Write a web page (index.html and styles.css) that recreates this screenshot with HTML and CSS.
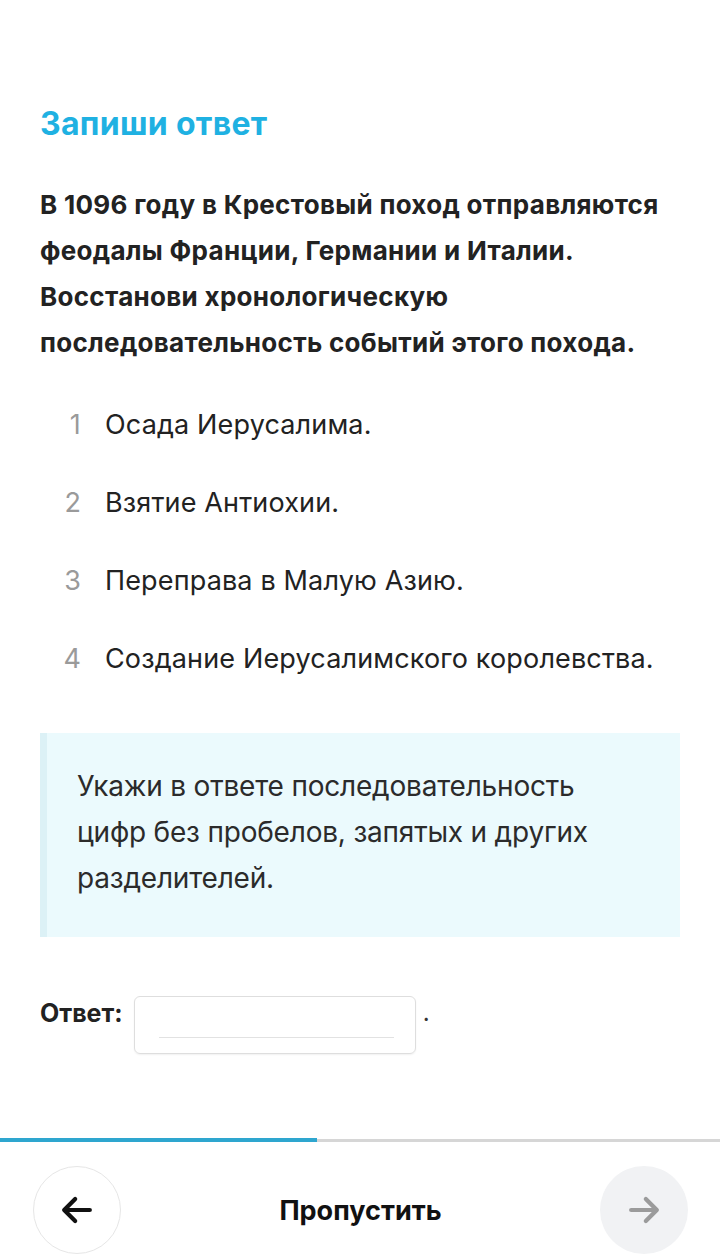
FILE: index.html
```html
<!DOCTYPE html>
<html lang="ru">
<head>
  <meta charset="UTF-8">
  <meta name="viewport" content="width=device-width, initial-scale=1.0">
  <title>Запиши ответ</title>
  <link rel="stylesheet" href="styles.css">
</head>
<body>
  <!-- Task -->
  <main class="task">
    <h1 class="task-title">Запиши ответ</h1>
    <p class="task-question">В 1096 году в Крестовый поход отправляются феодалы Франции, Германии и Италии. Восстанови хронологическую последовательность событий этого похода.</p>

    <ol class="events">
      <li><span class="num">1</span><span>Осада Иерусалима.</span></li>
      <li><span class="num">2</span><span>Взятие Антиохии.</span></li>
      <li><span class="num">3</span><span>Переправа в Малую Азию.</span></li>
      <li><span class="num">4</span><span>Создание Иерусалимского королевства.</span></li>
    </ol>

    <div class="hint">
      Укажи в ответе последовательность цифр без пробелов, запятых и других разделителей.
    </div>

    <div class="answer">
      <span class="answer-label">Ответ:</span>
      <label class="answer-box">
        <input type="text" class="answer-input">
      </label>
      <span class="answer-dot">.</span>
    </div>
  </main>

  <!-- Bottom navigation -->
  <footer class="footer">
    <div class="progress"><div class="progress-fill"></div></div>
    <nav class="nav">
      <button class="nav-btn nav-back" aria-label="Назад">
        <svg width="44" height="44" viewBox="0 0 24 24" fill="none" stroke="#111" stroke-width="2.3" stroke-linecap="round" stroke-linejoin="round">
          <path d="M19 12H5.5"/>
          <path d="M11 6l-6 6 6 6"/>
        </svg>
      </button>
      <span class="skip">Пропустить</span>
      <button class="nav-btn nav-next" aria-label="Далее">
        <svg width="44" height="44" viewBox="0 0 24 24" fill="none" stroke="#9b9b9b" stroke-width="2.3" stroke-linecap="round" stroke-linejoin="round">
          <path d="M5 12h13.5"/>
          <path d="M13 6l6 6-6 6"/>
        </svg>
      </button>
    </nav>
  </footer>
</body>
</html>
```

FILE: styles.css
```css
/* General */
body {
  margin: 0;
  min-height: 100vh;
  display: flex;
  flex-direction: column;
  font-family: Inter, Roboto, "Noto Sans", Arial, sans-serif;
  color: #222;
  background: #fff;
}

.task {
  padding: 106px 40px 0;
}

.task-title {
  margin: 0;
  font-size: 32px;
  line-height: 36px;
  font-weight: 700;
  letter-spacing: 0.3px;
  color: #1fb1e2;
}

.task-question {
  margin: 40px 0 0;
  font-size: 26px;
  line-height: 46px;
  font-weight: 700;
  letter-spacing: 0.3px;
  color: #222;
}

/* Events list */
.events {
  list-style: none;
  margin: 36px 0 0;
  padding: 0;
}

.events li {
  display: flex;
  font-size: 27px;
  line-height: 46px;
  letter-spacing: 0.15px;
  margin-bottom: 32px;
  color: #222;
}

.events li:last-child {
  margin-bottom: 0;
}

.events .num {
  width: 65px;
  text-align: right;
  padding-right: 24px;
  box-sizing: border-box;
  color: #9a9a9a;
}

/* Hint box */
.hint {
  margin-top: 51px;
  padding: 30px 60px 36px 30px;
  background: #ebfafd;
  border-left: 7px solid #dcf1f6;
  font-size: 28px;
  line-height: 46px;
  letter-spacing: -0.2px;
  color: #2b2b2b;
}

/* Answer */
.answer {
  display: flex;
  align-items: flex-start;
  margin-top: 59px;
}

.answer-label {
  font-size: 25px;
  line-height: 34px;
  font-weight: 700;
  margin-right: 11px;
}

.answer-box {
  display: flex;
  align-items: flex-end;
  width: 282px;
  height: 58px;
  box-sizing: border-box;
  padding: 0 21px 15px 24px;
  border: 1.5px solid #dedede;
  border-radius: 6px;
  box-shadow: 0 1px 2px rgba(0, 0, 0, 0.06);
}

.answer-input {
  width: 100%;
  border: none;
  border-bottom: 1.5px solid #e2e2e2;
  outline: none;
  padding: 0;
  height: 24px;
  font-size: 22px;
  background: transparent;
}

.answer-dot {
  font-size: 24px;
  line-height: 34px;
  margin-left: 7px;
  color: #333;
}

/* Footer */
.footer {
  margin-top: auto;
}

.progress {
  height: 4px;
  background: linear-gradient(#fff 0 1px, #d6d6d6 1px);
}

.progress-fill {
  width: 317px;
  height: 4px;
  background: #2ea6cf;
}

.nav {
  display: flex;
  align-items: center;
  justify-content: space-between;
  padding: 24px 32px 2px 33px;
}

.nav-btn {
  width: 88px;
  height: 88px;
  border-radius: 50%;
  display: flex;
  align-items: center;
  justify-content: center;
  padding: 0;
  cursor: pointer;
}

.nav-back {
  background: #fff;
  border: 1.5px solid #e6e6e6;
}

.nav-next {
  background: #f1f2f4;
  border: none;
}

.skip {
  font-size: 27px;
  font-weight: 700;
  color: #111;
}
```
